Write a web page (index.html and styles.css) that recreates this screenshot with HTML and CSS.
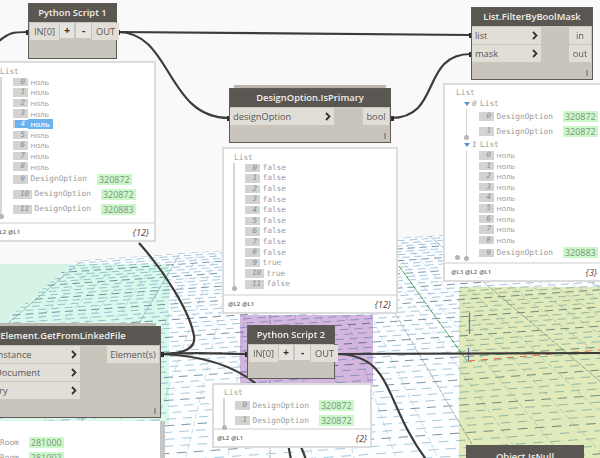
FILE: index.html
```html
<!DOCTYPE html>
<html lang="ru">
<head>
<meta charset="utf-8">
<title>Dynamo graph</title>
<link rel="stylesheet" href="styles.css">
</head>
<body>
<main class="canvas">
  <svg class="layer" width="600" height="458" viewBox="0 0 600 458">
    <defs><clipPath id="floorClip"><polygon points="75,261 600,224 600,458 0,458 0,325"/></clipPath></defs>
    <polygon class="floor" points="75,261 600,224 600,458 0,458 0,325"/>
    <g id="grid" clip-path="url(#floorClip)"></g>
    <rect class="tint tint-mint" x="0" y="264" width="169" height="160"/>
    <rect class="tint tint-purple" x="240" y="315" width="133" height="70"/>
    <rect class="tint tint-green" x="459" y="287" width="141" height="171"/>
    <line class="axis-green" x1="399" y1="266" x2="467" y2="361"/>
    <line class="axis-blue" x1="469.5" y1="313" x2="469.5" y2="334"/>
    <line class="axis-blue" x1="468.5" y1="348" x2="468.5" y2="361"/>
    <line class="axis-red" x1="468" y1="361" x2="600" y2="350"/>
  </svg>

  <svg class="layer" width="600" height="458" viewBox="0 0 600 458">
    <g class="wires">
      <path d="M-4,44 C8,32 14,32 28,32"/>
      <path d="M118,32 L471,35"/>
      <path d="M118,32 C172,32 166,118 229,118"/>
      <path d="M391,118 C442,118 420,54 471,54"/>
      <path d="M139,243 C165,272 190,312 194,336 C196,348 185,354 161,354"/>
      <path d="M161,354 C205,352 225,354 247,354"/>
      <path d="M161,354 C215,356 250,372 272,400 C284,416 300,440 306,460"/>
      <path d="M280,400 L291,460"/>
      <path d="M335,354 L600,353"/>
      <path d="M335,354 C395,354 382,402 428,462"/>
    </g>
    <g class="nubs">
      <rect x="26" y="30" width="3" height="5"/>
      <rect x="117" y="30" width="3" height="5"/>
      <rect x="227" y="116" width="3" height="5"/>
      <rect x="391" y="116" width="3" height="5"/>
      <rect x="469" y="33" width="3" height="5"/>
      <rect x="469" y="52" width="3" height="5"/>
      <rect x="161" y="352" width="3" height="5"/>
      <rect x="245" y="352" width="3" height="5"/>
      <rect x="335" y="352" width="3" height="5"/>
    </g>
  </svg>

  <section class="panel panel-a">
    <div class="panel-body">
      <div class="list-label">List</div>
      <div class="tree">
        <div class="row"><span class="idx">0</span><span class="null">ноль</span></div>
        <div class="row"><span class="idx">1</span><span class="null">ноль</span></div>
        <div class="row"><span class="idx">2</span><span class="null">ноль</span></div>
        <div class="row"><span class="idx">3</span><span class="null">ноль</span></div>
        <div class="row"><span class="idx idx-sel">4</span><span class="null null-sel">ноль</span></div>
        <div class="row"><span class="idx">5</span><span class="null">ноль</span></div>
        <div class="row"><span class="idx">6</span><span class="null">ноль</span></div>
        <div class="row"><span class="idx">7</span><span class="null">ноль</span></div>
        <div class="row"><span class="idx">8</span><span class="null">ноль</span></div>
        <div class="row row-data"><span class="idx">9</span><span class="mono">DesignOption</span><span class="chip">320872</span></div>
        <div class="row row-data"><span class="idx idx-long">10</span><span class="mono">DesignOption</span><span class="chip">320872</span></div>
        <div class="row row-data"><span class="idx idx-long">11</span><span class="mono">DesignOption</span><span class="chip">320883</span></div>
      </div>
    </div>
    <footer class="panel-foot"><span class="levels"><span>@L2</span><span>@L1</span></span><span class="count">{12}</span></footer>
  </section>

  <section class="panel panel-b">
    <div class="panel-body">
      <div class="list-label">List</div>
      <div class="tree">
        <div class="row"><span class="idx">0</span><span class="mono">false</span></div>
        <div class="row"><span class="idx">1</span><span class="mono">false</span></div>
        <div class="row"><span class="idx">2</span><span class="mono">false</span></div>
        <div class="row"><span class="idx">3</span><span class="mono">false</span></div>
        <div class="row"><span class="idx">4</span><span class="mono">false</span></div>
        <div class="row"><span class="idx">5</span><span class="mono">false</span></div>
        <div class="row"><span class="idx">6</span><span class="mono">false</span></div>
        <div class="row"><span class="idx">7</span><span class="mono">false</span></div>
        <div class="row"><span class="idx">8</span><span class="mono">false</span></div>
        <div class="row"><span class="idx">9</span><span class="mono">true</span></div>
        <div class="row"><span class="idx idx-long">10</span><span class="mono">true</span></div>
        <div class="row"><span class="idx idx-long">11</span><span class="mono">false</span></div>
      </div>
    </div>
    <footer class="panel-foot"><span class="levels"><span>@L2</span><span>@L1</span></span><span class="count">{12}</span></footer>
  </section>

  <section class="panel panel-c">
    <div class="panel-body">
      <div class="list-label">List</div>
      <div class="tree tree-plain">
        <div class="group">
          <div class="group-head"><span class="caret"></span><span class="group-idx">0</span><span class="mono">List</span></div>
          <div class="tree tree-inner">
            <div class="row row-data"><span class="idx">0</span><span class="mono">DesignOption</span><span class="chip">320872</span></div>
            <div class="row row-data"><span class="idx">1</span><span class="mono">DesignOption</span><span class="chip">320872</span></div>
          </div>
        </div>
        <div class="group">
          <div class="group-head"><span class="caret"></span><span class="group-idx">1</span><span class="mono">List</span></div>
          <div class="tree tree-inner">
            <div class="row"><span class="idx">0</span><span class="null">ноль</span></div>
            <div class="row"><span class="idx">1</span><span class="null">ноль</span></div>
            <div class="row"><span class="idx">2</span><span class="null">ноль</span></div>
            <div class="row"><span class="idx">3</span><span class="null">ноль</span></div>
            <div class="row"><span class="idx">4</span><span class="null">ноль</span></div>
            <div class="row"><span class="idx">5</span><span class="null">ноль</span></div>
            <div class="row"><span class="idx">6</span><span class="null">ноль</span></div>
            <div class="row"><span class="idx">7</span><span class="null">ноль</span></div>
            <div class="row"><span class="idx">8</span><span class="null">ноль</span></div>
            <div class="row row-data"><span class="idx">9</span><span class="mono">DesignOption</span><span class="chip">320883</span></div>
          </div>
        </div>
      </div>
    </div>
    <footer class="panel-foot"><span class="levels"><span>@L3</span><span>@L2</span><span>@L1</span></span><span class="count">{3}</span></footer>
  </section>

  <section class="panel panel-d">
    <div class="panel-body">
      <div class="list-label">List</div>
      <div class="tree">
        <div class="row row-data"><span class="idx">0</span><span class="mono">DesignOption</span><span class="chip">320872</span></div>
        <div class="row row-data"><span class="idx">1</span><span class="mono">DesignOption</span><span class="chip">320872</span></div>
      </div>
    </div>
    <footer class="panel-foot"><span class="levels"><span>@L2</span><span>@L1</span></span><span class="count">{2}</span></footer>
  </section>

  <section class="panel panel-e">
    <div class="panel-body">
      <div class="row row-data"><span class="mono">Room</span><span class="chip">281000</span></div>
      <div class="row row-data"><span class="mono">Room</span><span class="chip">281002</span></div>
    </div>
  </section>

  <article class="node node-script1">
    <h2 class="node-title">Python Script 1</h2>
    <div class="ports">
      <div class="port port-in">IN[0]</div>
      <div class="port-btn">+</div>
      <div class="port-btn port-btn-minus">-</div>
      <div class="port port-out">OUT</div>
    </div>
  </article>

  <article class="node node-primary node-stacked">
    <h2 class="node-title">DesignOption.IsPrimary</h2>
    <div class="node-io">
      <div class="inputs">
        <div class="port port-arg">designOption<svg class="chev" viewBox="0 0 6 9" width="6" height="9"><path d="M1 1l3.5 3.5L1 8"/></svg></div>
      </div>
      <div class="outputs"><div class="port port-res">bool</div></div>
    </div>
    <div class="node-foot"><span class="lacing"></span></div>
  </article>

  <article class="node node-filter">
    <h2 class="node-title">List.FilterByBoolMask</h2>
    <div class="node-io">
      <div class="inputs">
        <div class="port port-arg">list<svg class="chev" viewBox="0 0 6 9" width="6" height="9"><path d="M1 1l3.5 3.5L1 8"/></svg></div>
        <div class="port port-arg">mask<svg class="chev" viewBox="0 0 6 9" width="6" height="9"><path d="M1 1l3.5 3.5L1 8"/></svg></div>
      </div>
      <div class="outputs">
        <div class="port port-res">in</div>
        <div class="port port-res">out</div>
      </div>
    </div>
    <div class="node-foot"><span class="lacing"></span></div>
  </article>

  <article class="node node-linked node-stacked">
    <h2 class="node-title">Element.GetFromLinkedFile</h2>
    <div class="node-io">
      <div class="inputs">
        <div class="port port-arg"><span class="arg-name">Instance</span><svg class="chev" viewBox="0 0 6 9" width="6" height="9"><path d="M1 1l3.5 3.5L1 8"/></svg></div>
        <div class="port port-arg"><span class="arg-name">Document</span><svg class="chev" viewBox="0 0 6 9" width="6" height="9"><path d="M1 1l3.5 3.5L1 8"/></svg></div>
        <div class="port port-arg"><span class="arg-name arg-query">Query</span><svg class="chev" viewBox="0 0 6 9" width="6" height="9"><path d="M1 1l3.5 3.5L1 8"/></svg></div>
      </div>
      <div class="outputs"><div class="port port-res">Element(s)</div></div>
    </div>
    <div class="node-foot"><span class="lacing"></span></div>
  </article>

  <article class="node node-script2">
    <h2 class="node-title">Python Script 2</h2>
    <div class="ports">
      <div class="port port-in">IN[0]</div>
      <div class="port-btn">+</div>
      <div class="port-btn port-btn-minus">-</div>
      <div class="port port-out">OUT</div>
    </div>
  </article>

  <div class="node-partial">
    <h2 class="node-title">Object.IsNull</h2>
  </div>
</main>
<script src="grid.js"></script>
</body>
</html>
```
FILE: styles.css
```css
* { box-sizing: border-box; }
html, body { margin: 0; padding: 0; }
body { width: 600px; height: 458px; overflow: hidden; background: #f9f9f9; font-family: "Open Sans", sans-serif; }

.canvas { position: relative; width: 600px; height: 458px; overflow: hidden; background: #f9f9f9; }
.layer { position: absolute; left: 0; top: 0; display: block; }

.floor { fill: #fdfeff; }
.tint { mix-blend-mode: multiply; }
.tint-mint { fill: #dcf9ec; }
.tint-purple { fill: #d5b8de; }
.tint-green { fill: #e2ebba; }
.axis-green { stroke: #3f9a4a; stroke-width: 1; stroke-dasharray: 5 1; }
.axis-blue { stroke: #5f70b8; stroke-width: 1.2; }
.axis-red { stroke: #e0674a; stroke-width: 1; stroke-dasharray: 7 6; }

.wires path { fill: none; stroke: #3c3b39; stroke-width: 2.2; }
.nubs rect { fill: #2e2d2b; }

/* Watch panels */
.panel { position: absolute; display: flex; flex-direction: column; background: #fff; border: 2px solid #dcdcdc; }
.panel-a { left: -20px; top: 61px; width: 176px; height: 181px; }
.panel-b { left: 222px; top: 147px; width: 176px; height: 167px; }
.panel-c { left: 443px; top: 83px; width: 180px; height: 199px; }
.panel-d { left: 212px; top: 383px; width: 160px; height: 65px; }
.panel-e { left: -20px; top: 421px; width: 185px; height: 50px; border: 0; border-right: 5px solid #c6c6c6; }

.panel-body { flex: 1; min-height: 0; }
.panel-a .panel-body { padding: 3.5px 0 0 18px; }
.panel-b .panel-body { padding: 3.5px 0 0 9px; }
.panel-c .panel-body { padding: 3px 0 0 11px; }
.panel-d .panel-body { padding: 3px 0 0 9px; }
.panel-e .panel-body { padding: 14px 0 0 20px; }

.list-label { height: 10px; font: 7.8px/10px "DejaVu Sans Mono", monospace; color: #a2a2a2; }
.panel-b .list-label, .panel-d .list-label { padding-left: 1px; }

.tree { position: relative; border-left: 2px solid #d6d6d6; padding-left: 11px; }
.panel-b .tree { padding-left: 10px; height: 126px; }
.panel-d .tree { padding-left: 10px; }
.tree::after { content: ""; position: absolute; left: -3.5px; bottom: -2px; width: 5px; height: 5px; border-radius: 50%; background: #b5b5b5; }
.tree-plain { border-left: 2px solid transparent; padding-left: 0; }
.tree-plain > .group { margin-left: 6px; }
.tree-plain::after { left: -3px; bottom: 0; }
.tree-inner { margin-left: 2px; padding-left: 12px; border-left-width: 1.5px; }
.tree-plain .tree-inner::after { left: -3.5px; bottom: -1px; }

.group-head { display: flex; align-items: center; height: 11px; }
.caret { width: 0; height: 0; margin-right: 2px; border-left: 3px solid transparent; border-right: 3px solid transparent; border-top: 4px solid #5b92c4; }
.group-idx { width: 8px; font: italic 7.5px/11px "DejaVu Sans Mono", monospace; color: #8e8e8e; }

.row { display: flex; align-items: center; height: 10.6px; white-space: nowrap; }
.row-data { height: 15px; }
.idx { flex: none; width: 15px; height: 8.5px; margin-right: 2.5px; padding-right: 3px; background: #d3d3d3; color: #8a8a8a; font: italic 7.5px/8.5px "DejaVu Sans Mono", monospace; text-align: right; }
.idx-long { width: 19px; }
.idx-sel { background: linear-gradient(90deg, #d3d3d3 2px, #69b3ee 2px); color: #eef6fd; }
.null { font-size: 7.8px; line-height: 10px; color: #9a9a9a; }
.null-sel { margin-left: -2.5px; padding: 0 3px 0 2.5px; background: #69b3ee; color: #fff; font-weight: 600; }
.mono { font: 7.8px/10px "DejaVu Sans Mono", monospace; color: #9b9b9b; }
.chip { flex: none; width: 35px; height: 11px; margin-left: 10px; background: #caf8c6; color: #85918a; font-size: 9px; line-height: 11px; text-align: center; }

.panel-foot { display: flex; flex: none; align-items: center; justify-content: space-between; height: 18px; padding: 0 5px 0 4px; border-top: 2px solid #e6e6e6; }
.panel-a .panel-foot { padding-left: 12px; }
.panel-c .panel-foot { padding-left: 6px; padding-right: 24px; }
.panel-d .panel-foot { padding-left: 3px; padding-right: 3px; }
.levels { display: flex; gap: 2px; font-size: 6px; font-weight: 600; color: #666; }
.count { font-size: 9px; font-style: italic; color: #5d3b3b; }

/* Nodes */
.node { position: absolute; display: flex; flex-direction: column; background: #c9c5bd; border: 1px solid #5f5c57; }
.node-script1 { left: 28px; top: 3px; width: 89px; height: 56px; }
.node-script2 { left: 247px; top: 325px; width: 88px; height: 54px; }
.node-primary { left: 229px; top: 88px; width: 162px; height: 55px; }
.node-filter { left: 471px; top: 7px; width: 122px; height: 73px; }
.node-linked { left: -35px; top: 326px; width: 196px; height: 92px; }
.node-stacked::before { content: ""; position: absolute; left: 4px; right: 4px; top: -4px; height: 3px; background: #bcb8b0; }

.node-title { flex: none; height: 18px; margin: 0; background: #5a5651; color: #f1efea; font-size: 9.4px; font-weight: 600; line-height: 18px; text-align: center; white-space: nowrap; }

.ports { display: flex; align-items: flex-start; gap: 1px; padding: 1px 1px 0; }
.port { display: flex; align-items: center; flex: none; height: 17px; background: #e1ded8; color: #5a5855; font-size: 9.3px; line-height: 17px; white-space: nowrap; }
.port-in { width: 29px; justify-content: center; }
.port-out { width: 27px; justify-content: center; }
.port-btn { flex: none; width: 14px; height: 15px; background: #e6e4de; color: #2f2f2f; font-size: 10px; font-weight: 700; line-height: 14px; text-align: center; }
.port-btn-minus { width: 15px; }
.node-script1 .port-btn-minus, .node-script2 .port-btn-minus { margin-left: 1px; }

.node-io { display: flex; flex: none; justify-content: space-between; padding-top: 1px; }
.inputs, .outputs { display: flex; flex-direction: column; gap: 1px; }
.port-arg { justify-content: space-between; padding: 0 3px 0 3px; }
.node-primary .port-arg { width: 104px; }
.node-filter .port-arg { width: 69px; }
.node-linked .port-arg { width: 114px; padding-left: 0; }
.arg-name { padding-left: 29px; }
.arg-query { padding-left: 15px; }
.port-res { justify-content: center; margin-right: 1px; }
.node-primary .port-res { width: 26px; }
.node-filter .port-res { width: 22px; }
.node-linked .port-res { width: 52px; }
.chev { flex: none; fill: none; stroke: #333; stroke-width: 1.8; }

.node-foot { display: flex; flex: 1; align-items: flex-end; justify-content: flex-end; padding: 0 4px 3px 0; }
.lacing { width: 2px; height: 6px; background: #97938c; }

.node-partial { position: absolute; left: 466px; top: 445px; width: 118px; height: 30px; background: #5a5651; }
.node-partial .node-title { background: transparent; height: 24px; line-height: 24px; }
```
FILE: grid.js
```js
(function () {
  var NS = "http://www.w3.org/2000/svg";
  var grid = document.getElementById("grid");
  var seed = 7;
  function rnd() { seed = (seed * 16807) % 2147483647; return seed / 2147483647; }
  function line(x1, y1, x2, y2, color, dash, offset, opacity) {
    var l = document.createElementNS(NS, "line");
    l.setAttribute("x1", x1); l.setAttribute("y1", y1);
    l.setAttribute("x2", x2); l.setAttribute("y2", y2);
    l.setAttribute("stroke", color);
    l.setAttribute("stroke-width", "1");
    l.setAttribute("stroke-opacity", opacity);
    if (dash) { l.setAttribute("stroke-dasharray", dash); l.setAttribute("stroke-dashoffset", offset); }
    grid.appendChild(l);
  }
  var vx = 270, vy = 100;
  for (var k = -18; k <= 30; k++) {
    var bx = vx + k * 42;
    var major = ((k % 5) + 5) % 5 === 0;
    line(vx, vy, bx, 458, major ? "#7f919c" : "#c3d5e0", major ? "4 1" : "5 3", k, major ? 0.75 : 0.85);
  }
  var y0 = 266, i = 0;
  while (y0 < 520) {
    var step = 2.6 + (y0 - 266) * 0.024;
    var d = 6 + step * 0.5, g = 3 + step * 0.6;
    var dark = i % 4 === 0;
    line(0, y0, 600, y0 - 42, dark ? "#7c97a9" : "#a5c8df", d.toFixed(1) + " " + g.toFixed(1), Math.round(rnd() * 20), 1);
    y0 += step; i++;
  }
})();
```
